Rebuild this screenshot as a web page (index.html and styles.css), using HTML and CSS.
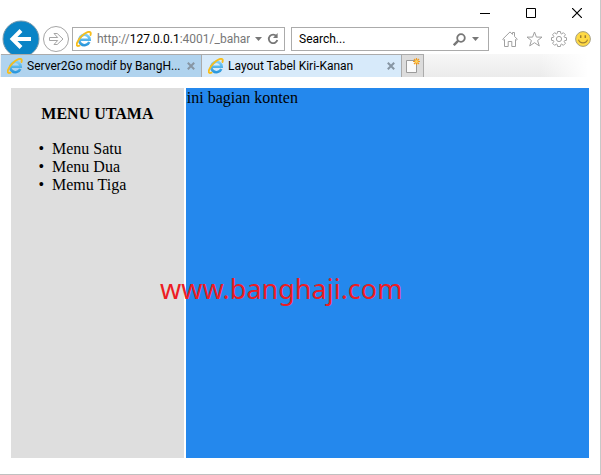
FILE: index.html
```html
<!DOCTYPE html>
<html lang="id">
<head>
<meta charset="utf-8">
<title>Layout Tabel Kiri-Kanan</title>
<link rel="stylesheet" href="styles.css">
</head>
<body>
<svg width="0" height="0" class="defs" aria-hidden="true">
  <defs>
    <linearGradient id="sky" x1="0" y1="0" x2="0" y2="1"><stop offset="0" stop-color="#7fd0f7"/><stop offset="1" stop-color="#2a97dc"/></linearGradient>
    <symbol id="ie" viewBox="0 0 16 16">
      <path d="M13.300 11A5.200 5.200 0 1 1 13.700 8.800H4.500" fill="none" stroke="url(#sky)" stroke-width="2.600"/>
      <path d="M3.500 14.600C1.300 15.600.2 14.600 1 12 2.200 8 7.500 2.600 11.500 1.200c2.600-.9 3.800.2 3 2.800" fill="none" stroke="#f7bd1c" stroke-width="1.900" stroke-linecap="round"/>
    </symbol>
    <symbol id="cross" viewBox="0 0 8 8"><path d="M.8.8l6.400 6.400M7.200.8L.8 7.200" stroke="#8796a3" stroke-width="2"/></symbol>
  </defs>
</svg>
<div class="window">
  <header class="titlebar">
    <button class="caption" aria-label="Minimize"><svg width="10" height="10" viewBox="0 0 10 10"><path d="M0 5.500h10" stroke="#000"/></svg></button>
    <button class="caption" aria-label="Maximize"><svg width="10" height="10" viewBox="0 0 10 10"><path d="M.5.5h9v9h-9z" fill="none" stroke="#000"/></svg></button>
    <button class="caption" aria-label="Close"><svg width="10" height="10" viewBox="0 0 10 10"><path d="M0 0l10 10M10 0L0 10" stroke="#000" stroke-width="1.200"/></svg></button>
  </header>
  <nav class="toolbar" aria-label="Browser">
    <button class="back" aria-label="Back"><svg width="38" height="38" viewBox="0 0 38 38"><circle cx="19" cy="19" r="18" fill="#0a84c6" stroke="#7b9bad"/><path d="M29 19H11M19 10.500L10.500 19l8.500 8.500" fill="none" stroke="#fff" stroke-width="4"/></svg></button>
    <button class="forward" aria-label="Forward"><svg width="26" height="26" viewBox="0 0 26 26"><circle cx="13" cy="13" r="12.500" fill="#fff" stroke="#a5a5a5"/><path d="M6.500 11.500h8.200l-3.700-4h3.200l5.800 5.500-5.800 5.500H11l3.700-4H6.500z" fill="none" stroke="#a5a5a5"/></svg></button>
    <div class="field address">
      <svg width="16" height="16"><use href="#ie"/></svg>
      <a class="url" href="#">http://<b>127.0.0.1</b>:4001/_bahar</a>
      <button aria-label="Show addresses"><svg width="7" height="4" viewBox="0 0 7 4"><path d="M0 0h7L3.500 4z" fill="#777"/></svg></button>
      <button aria-label="Refresh"><svg width="12" height="12" viewBox="0 0 12 12"><path d="M9.500 3.200A4.300 4.300 0 1 0 10.300 7" fill="none" stroke="#777" stroke-width="1.800"/><path d="M10.600 0v5H6z" fill="#777"/></svg></button>
    </div>
    <div class="field search">
      <input type="text" placeholder="Search..." aria-label="Search">
      <button aria-label="Search"><svg width="13" height="13" viewBox="0 0 13 13"><circle cx="8" cy="5" r="3.800" fill="none" stroke="#777" stroke-width="1.800"/><path d="M5.300 7.700L.8 12.200" stroke="#777" stroke-width="2.400"/></svg></button>
      <button aria-label="Search providers"><svg width="7" height="4" viewBox="0 0 7 4"><path d="M0 0h7L3.500 4z" fill="#777"/></svg></button>
    </div>
    <div class="tools">
      <button aria-label="Home"><svg width="16" height="16" viewBox="0 0 16 16"><path d="M.7 8.200L8 .9l2.500 2.500V1.500h2v3.900l2.800 2.800-1 1-.8-.7v7H9.800v-5H6.200v5H2.500v-7l-.8.700z" fill="#fff" stroke="#a0a0a0"/></svg></button>
      <button aria-label="Favorites"><svg width="17" height="16" viewBox="0 0 17 16"><path d="M8.500 1l1.900 5.100h5.600l-4.400 3.400 1.700 5.400-4.800-3.200-4.800 3.200 1.700-5.400L1 6.100h5.600z" fill="#fff" stroke="#a0a0a0"/></svg></button>
      <button aria-label="Tools"><svg width="16" height="16" viewBox="0 0 16 16"><path d="M6.600.5h2.800l.4 2 .8.400 1.800-1.200 2 2-1.200 1.800.3.800 2 .4v2.600l-2 .4-.3.800 1.200 1.800-2 2-1.800-1.200-.8.400-.4 2H6.600l-.4-2-.8-.4-1.800 1.200-2-2 1.200-1.800-.3-.8-2-.4V6.700l2-.4.3-.8L1.600 3.700l2-2 1.800 1.200.8-.4z" fill="#fff" stroke="#a0a0a0"/><circle cx="8" cy="8" r="2.600" fill="#fff" stroke="#a0a0a0"/></svg></button>
      <button aria-label="Send a smile"><svg width="16" height="16" viewBox="0 0 16 16"><circle cx="8" cy="8" r="7.400" fill="#ffda45" stroke="#a6a085"/><path d="M5.700 4.300v2.700M10.300 4.300v2.700" stroke="#a08032" stroke-width="1.500"/><path d="M3.500 8.700c1.200 4.300 7.800 4.300 9 0" fill="none" stroke="#a08032" stroke-width="1.200"/></svg></button>
    </div>
  </nav>
  <div class="tabs" aria-label="Tabs">
    <div class="tab">
      <svg width="16" height="16"><use href="#ie"/></svg>
      <a href="#">Server2Go modif by BangH...</a>
      <button aria-label="Close tab"><svg width="8" height="8"><use href="#cross"/></svg></button>
    </div>
    <div class="tab current">
      <svg width="16" height="16"><use href="#ie"/></svg>
      <a href="#">Layout Tabel Kiri-Kanan</a>
      <button aria-label="Close tab"><svg width="8" height="8"><use href="#cross"/></svg></button>
    </div>
    <button class="newtab" aria-label="New tab"><svg width="16" height="16" viewBox="0 0 16 16"><path d="M1.500 2.500h10v12h-10z" fill="#fafafa" stroke="#9b9b9b"/><path d="M11.500 0v7M8 3.500h7M9 1l5 5M14 1L9 6" stroke="#ef9b22" stroke-width="1.200"/><circle cx="11.500" cy="3.500" r="1.500" fill="#ffd45a"/></svg></button>
  </div>
  <main class="page">
    <aside class="menu">
      <h3>MENU UTAMA</h3>
      <ul>
        <li>Menu Satu</li>
        <li>Menu Dua</li>
        <li>Memu Tiga</li>
      </ul>
    </aside>
    <section class="content">ini bagian konten</section>
    <div class="watermark">www.banghaji.com</div>
  </main>
</div>
</body>
</html>
```
FILE: styles.css
```css
* { box-sizing: border-box; }
body {
  margin: 0;
  background: #fff;
  font: 12px/16px Roboto, "Open Sans", sans-serif;
  color: #000;
}
svg { display: block; flex: none; }
.defs { position: absolute; }
button {
  display: flex;
  align-items: center;
  justify-content: center;
  flex: none;
  padding: 0;
  border: 0;
  background: none;
}
a { color: inherit; text-decoration: none; }

.window {
  display: flex;
  flex-direction: column;
  min-height: 100vh;
  border-right: 1px solid #c8c8c8;
  border-bottom: 1px solid #c0c0c0;
}
.titlebar {
  display: flex;
  justify-content: flex-end;
  height: 27px;
}
.caption { width: 46px; height: 26px; }

.toolbar {
  display: flex;
  align-items: center;
  height: 24px;
  margin-bottom: 3px;
  padding: 0 9px 0 2px;
}
.forward { margin: 0 3px; }
.field {
  display: flex;
  align-items: center;
  height: 24px;
  border: 1px solid #ababab;
  background: #fff;
}
.address {
  flex: 1 1 213px;
  min-width: 0;
  gap: 5px;
  padding: 0 5px 0 3px;
}
.url {
  flex: 1;
  min-width: 0;
  overflow: hidden;
  white-space: nowrap;
  color: #777;
}
.url b { font-weight: 400; color: #000; }
.search {
  flex: 1 1 198px;
  min-width: 0;
  gap: 6px;
  margin-left: 6px;
  padding: 0 9px 0 7px;
}
.search input {
  flex: 1;
  min-width: 0;
  padding: 0;
  border: 0;
  outline: 0;
  background: none;
  font: inherit;
}
.search input::placeholder { color: #000; opacity: 1; }
.tools {
  display: flex;
  align-items: center;
  gap: 8px;
  margin-left: 13px;
}

.tabs {
  position: relative;
  display: flex;
  height: 23px;
  padding-left: 1px;
  background: linear-gradient(90deg, transparent 90%, #fff 98%), linear-gradient(#f7f7f7, #ebebeb);
}
.tab {
  display: flex;
  align-items: center;
  flex: 0 1 201px;
  min-width: 0;
  gap: 4px;
  padding: 0 6px;
  border-top: 1px solid #ababab;
  border-right: 1px solid #ababab;
  background: #b0d3ee;
}
.tab a {
  flex: 1;
  min-width: 0;
  overflow: hidden;
  white-space: nowrap;
}
.tab.current { flex-basis: 200px; background: #d7eafa; }
.newtab {
  width: 22px;
  border: 1px solid #ababab;
  border-width: 1px 1px 0 0;
  background: #dcdcdc;
}

.page {
  position: relative;
  display: grid;
  grid-template-columns: 3fr 7fr;
  gap: 2px;
  flex: 1;
  padding: 11px 11px 16px;
  font: 16px/18px "Liberation Serif", serif;
}
.menu { padding: 1px; background: #dedede; }
.menu h3 { margin: 16px 0; font-size: 16px; text-align: center; }
.menu ul { margin: 17px 0; padding-left: 40px; list-style-type: "•\00a0\00a0"; }
.content { padding: 1px; background: #2488ed; }
.watermark {
  position: absolute;
  top: 192px;
  left: 160px;
  font: 27px/40px "Noto Sans", "Open Sans", sans-serif;
  color: #ed1c24;
}
```
